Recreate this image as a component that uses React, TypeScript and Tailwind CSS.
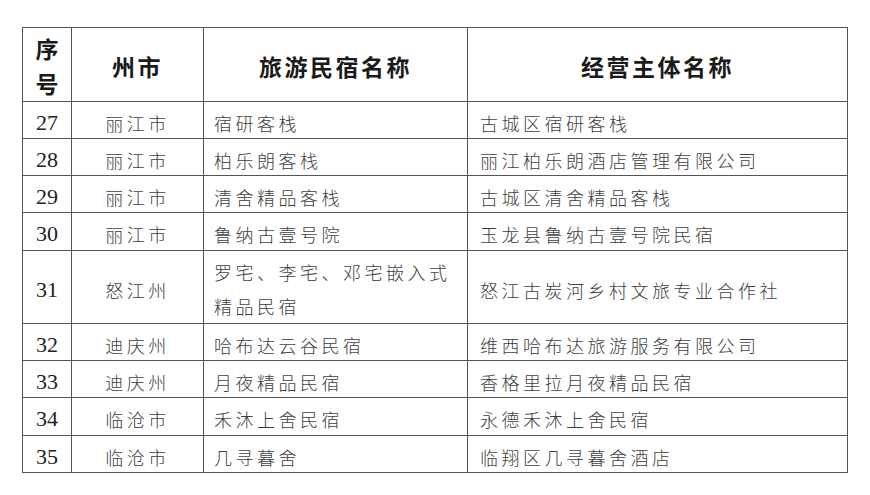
import React from "react";

const rows: { no: string; city: string; name: string[]; owner: string; h: number }[] = [
  { no: "27", city: "丽江市", name: ["宿研客栈"], owner: "古城区宿研客栈", h: 37 },
  { no: "28", city: "丽江市", name: ["柏乐朗客栈"], owner: "丽江柏乐朗酒店管理有限公司", h: 37 },
  { no: "29", city: "丽江市", name: ["清舍精品客栈"], owner: "古城区清舍精品客栈", h: 37 },
  { no: "30", city: "丽江市", name: ["鲁纳古壹号院"], owner: "玉龙县鲁纳古壹号院民宿", h: 38 },
  { no: "31", city: "怒江州", name: ["罗宅、李宅、邓宅嵌入式", "精品民宿"], owner: "怒江古炭河乡村文旅专业合作社", h: 73 },
  { no: "32", city: "迪庆州", name: ["哈布达云谷民宿"], owner: "维西哈布达旅游服务有限公司", h: 37 },
  { no: "33", city: "迪庆州", name: ["月夜精品民宿"], owner: "香格里拉月夜精品民宿", h: 37 },
  { no: "34", city: "临沧市", name: ["禾沐上舍民宿"], owner: "永德禾沐上舍民宿", h: 38 },
  { no: "35", city: "临沧市", name: ["几寻暮舍"], owner: "临翔区几寻暮舍酒店", h: 37 },
];

const cjk = "font-['Noto_Sans_CJK_SC',sans-serif]";

export default function App() {
  return (
    <div className="w-[870px] h-[495px] bg-white pt-[27px] pl-[22px]">
      <table className="table-fixed border-collapse w-[825px] border border-[#555]">
        <colgroup>
          <col className="w-[49px]" />
          <col className="w-[132px]" />
          <col className="w-[264px]" />
          <col className="w-[380px]" />
        </colgroup>
        <thead>
          <tr className="h-[74px]">
            <th className={`border border-[#555] p-0 pt-[2px] text-center align-middle text-[23px] leading-[35px] font-bold text-[#1a1a1a] ${cjk}`}>
              序<br />号
            </th>
            <th className={`border border-[#555] p-0 pt-[2px] text-center align-middle text-[23px] leading-[30px] font-bold tracking-[2.5px] text-[#1a1a1a] ${cjk}`}>
              州市
            </th>
            <th className={`border border-[#555] p-0 pt-[2px] text-center align-middle text-[23px] leading-[30px] font-bold tracking-[2.5px] text-[#1a1a1a] ${cjk}`}>
              旅游民宿名称
            </th>
            <th className={`border border-[#555] p-0 pt-[2px] text-center align-middle text-[23px] leading-[30px] font-bold tracking-[2.5px] text-[#1a1a1a] ${cjk}`}>
              经营主体名称
            </th>
          </tr>
        </thead>
        <tbody>
          {rows.map((r) => (
            <tr key={r.no} style={{ height: r.h }}>
              <td className="border border-[#555] p-0 pt-[5px] text-center align-middle text-[22px] leading-[26px] text-[#222] font-['Liberation_Serif',serif]">
                {r.no}
              </td>
              <td className={`border border-[#555] p-0 pt-[5px] text-center align-middle text-[18px] leading-[26px] font-light tracking-[3.5px] text-[#404040] ${cjk}`}>
                {r.city}
              </td>
              <td
                className={`border border-[#555] p-0 pl-[10px] text-left align-middle text-[18px] font-light tracking-[3.5px] text-[#404040] ${cjk} ${
                  r.name.length > 1 ? "pt-[3px] leading-[34px]" : "pt-[5px] leading-[26px]"
                }`}
              >
                {r.name.map((n, i) => (
                  <div key={i}>{n}</div>
                ))}
              </td>
              <td className={`border border-[#555] p-0 pt-[5px] pl-[12px] text-left align-middle text-[18px] leading-[26px] font-light tracking-[3.5px] text-[#404040] ${cjk}`}>
                {r.owner}
              </td>
            </tr>
          ))}
        </tbody>
      </table>
    </div>
  );
}
